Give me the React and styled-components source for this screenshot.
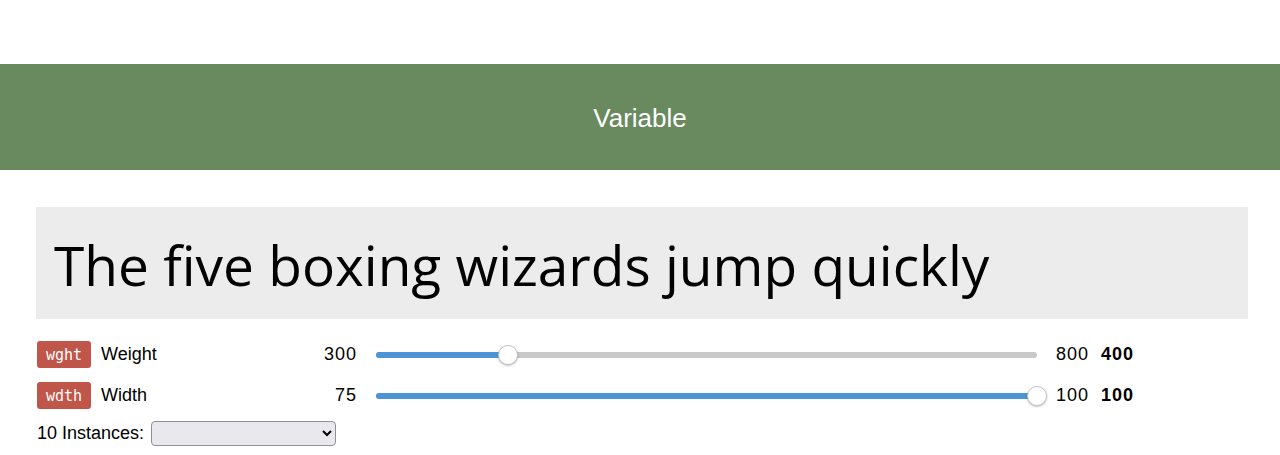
import React from 'react'
import styled, { createGlobalStyle } from 'styled-components'

const GlobalStyle = createGlobalStyle`
    body {
        margin: 0;
        background: #ffffff;
        font-family: 'Liberation Sans', Arial, sans-serif;
        color: #000000;
    }
`

const axes = [
    { tag: 'wght', name: 'Weight', min: 300, max: 800, value: 400 },
    { tag: 'wdth', name: 'Width', min: 75, max: 100, value: 100 },
]

function Slider({ min, max, value }) {
    const pct = ((value - min) / (max - min)) * 100
    return (
        <Track>
            <Fill style={{ width: `${pct}%` }} />
            <Thumb style={{ left: `${pct}%` }} />
        </Track>
    )
}

function App() {
    return (
        <Page>
            <GlobalStyle />
            <Banner>Variable</Banner>
            <Content>
                <Specimen>The five boxing wizards jump quickly</Specimen>
                <Axes>
                    {axes.map(axis => (
                        <AxisRow key={axis.tag}>
                            <Tag>{axis.tag}</Tag>
                            <AxisName>{axis.name}</AxisName>
                            <Num $width="56px" $align="right">{axis.min}</Num>
                            <Slider {...axis} />
                            <Num $width="45px">{axis.max}</Num>
                            <Num $bold>{axis.value}</Num>
                        </AxisRow>
                    ))}
                </Axes>
                <InstanceRow>
                    <span>10 Instances:</span>
                    <Select>
                        <option></option>
                    </Select>
                </InstanceRow>
            </Content>
        </Page>
    )
}

const Page = styled.div`
    padding-top: 64px;
`

const Banner = styled.header`
    height: 106px;
    background: #698a5f;
    color: #ffffff;
    display: flex;
    align-items: center;
    justify-content: center;
    padding-top: 2px;
    box-sizing: border-box;
    font-size: 26px;
`

const Content = styled.main`
    margin: 37px 32px 0 36px;
`

const Specimen = styled.div`
    height: 112px;
    background: #ececec;
    display: flex;
    align-items: center;
    padding: 2px 18px 0;
    box-sizing: border-box;
    font-family: 'Open Sans', sans-serif;
    font-size: 55px;
    color: #000000;
    white-space: nowrap;
`

const Axes = styled.div`
    display: flex;
    flex-direction: column;
    gap: 14px;
    margin-top: 22px;
    padding-left: 1px;
`

const AxisRow = styled.div`
    display: flex;
    align-items: center;
    height: 27px;
    font-size: 18px;
`

const Tag = styled.span`
    width: 54px;
    height: 27px;
    margin-right: 10px;
    border-radius: 3px;
    background: #bf5649;
    color: #ffffff;
    font-family: 'DejaVu Sans Mono', 'Liberation Mono', monospace;
    font-size: 15px;
    display: flex;
    align-items: center;
    justify-content: center;
`

const AxisName = styled.span`
    width: 200px;
`

const Num = styled.span`
    width: ${p => p.$width || 'auto'};
    text-align: ${p => p.$align || 'left'};
    font-weight: ${p => (p.$bold ? 700 : 400)};
    letter-spacing: 1px;
`

const Track = styled.div`
    position: relative;
    width: 661px;
    height: 6px;
    margin: 0 19px;
    border-radius: 3px;
    background: #c9c9c9;
`

const Fill = styled.div`
    height: 100%;
    border-radius: 3px;
    background: #4b94d6;
`

const Thumb = styled.div`
    position: absolute;
    top: 50%;
    width: 20px;
    height: 20px;
    border-radius: 50%;
    background: #ffffff;
    border: 1px solid #c4c4c4;
    box-shadow: 0 1px 2px rgba(0, 0, 0, 0.25);
    box-sizing: border-box;
    transform: translate(-50%, -50%);
`

const InstanceRow = styled.div`
    display: flex;
    align-items: center;
    gap: 7px;
    margin-top: 12px;
    padding-left: 1px;
    font-size: 18px;
`

const Select = styled.select`
    width: 185px;
    height: 25px;
    border: 1px solid #8f8f9d;
    border-radius: 4px;
    background: #e9e9ed;
`

export default App
